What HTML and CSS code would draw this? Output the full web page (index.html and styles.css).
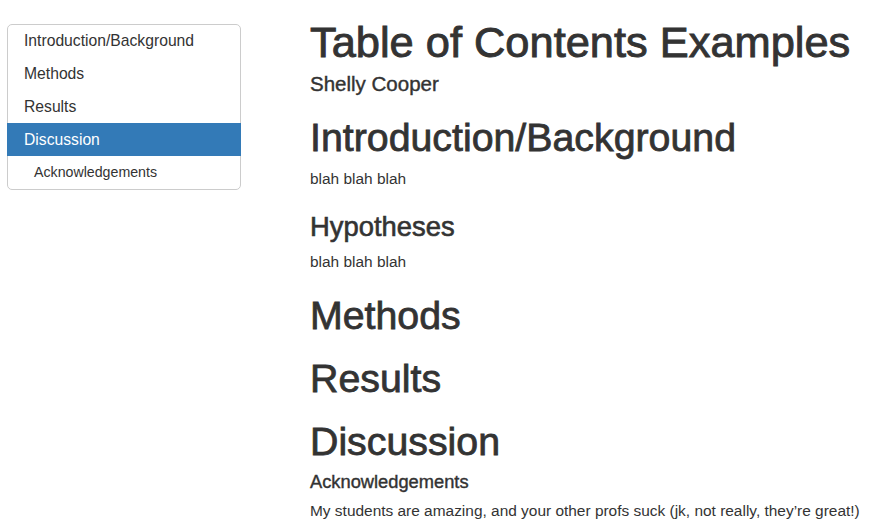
FILE: index.html
```html
<!DOCTYPE html>
<html lang="en">
<head>
<meta charset="utf-8">
<title>Table of Contents Examples</title>
<link rel="stylesheet" href="styles.css">
</head>
<body>
<div class="page">
  <nav class="toc-col">
    <ul class="toc">
      <li class="toc-item">Introduction/Background</li>
      <li class="toc-item">Methods</li>
      <li class="toc-item">Results</li>
      <li class="toc-item active">Discussion</li>
      <li class="toc-item sub">Acknowledgements</li>
    </ul>
  </nav>
  <main class="content">
    <h1 class="title">Table of Contents Examples</h1>
    <h4 class="author">Shelly Cooper</h4>
    <h1 class="sec">Introduction/Background</h1>
    <p class="text">blah blah blah</p>
    <h3 class="subsec">Hypotheses</h3>
    <p class="text">blah blah blah</p>
    <h1 class="sec">Methods</h1>
    <h1 class="sec">Results</h1>
    <h1 class="sec">Discussion</h1>
    <h4 class="minor">Acknowledgements</h4>
    <p class="text">My students are amazing, and your other profs suck (jk, not really, they’re great!)</p>
  </main>
</div>
</body>
</html>
```

FILE: styles.css
```css
html, body {
  margin: 0;
  padding: 0;
  background: #ffffff;
}

body {
  font-family: "Liberation Sans", Arial, sans-serif;
  color: #333333;
  font-size: 15.45px;
  line-height: 22px;
}

.page {
  display: flex;
  align-items: flex-start;
}

.toc-col {
  width: 234px;
  margin-left: 7px;
  padding-top: 24px;
  flex: none;
}

.toc {
  list-style: none;
  margin: 0;
  padding: 0;
  border: 1px solid #cccccc;
  border-radius: 5px;
}

.toc-item {
  height: 33px;
  line-height: 33px;
  padding-left: 16px;
  font-size: 15.7px;
  color: #333333;
  white-space: nowrap;
}

.toc-item:first-child {
  height: 32px;
  line-height: 32px;
}

.toc-item.active {
  background: #337ab7;
  color: #ffffff;
  margin: 0 -1px;
  padding-left: 17px;
}

.toc-item.sub {
  padding-left: 26px;
  font-size: 14.2px;
}

.content {
  margin-left: 69px;
  flex: 1;
  min-width: 0;
  white-space: nowrap;
}

.title {
  font-size: 43.4px;
  line-height: 47px;
  font-weight: normal;
  -webkit-text-stroke: 0.9px #333333;
  margin: 19px 0 0;
}

.author {
  font-size: 20.5px;
  line-height: 22px;
  font-weight: normal;
  -webkit-text-stroke: 0.4px #333333;
  margin: 7px 0 21px;
}

.sec {
  font-size: 39.3px;
  line-height: 42px;
  font-weight: normal;
  -webkit-text-stroke: 0.8px #333333;
  margin: 21px 0 10px;
}

.subsec {
  font-size: 27.4px;
  line-height: 30px;
  font-weight: normal;
  -webkit-text-stroke: 0.6px #333333;
  margin: 22px 0 9px;
}

.minor {
  font-size: 18.3px;
  line-height: 19px;
  font-weight: normal;
  -webkit-text-stroke: 0.4px #333333;
  margin: 10px 0 9px;
}

.text {
  margin: 0;
}
```
